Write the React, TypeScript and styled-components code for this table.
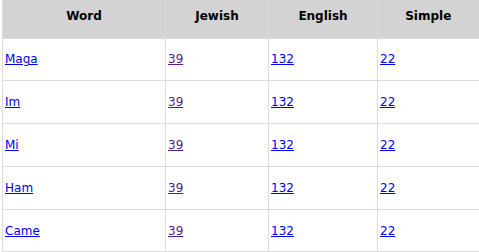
import styled, { createGlobalStyle } from 'styled-components'

const rows = [
	{ word: 'Maga', jewish: 39, english: 132, simple: 22 },
	{ word: 'Im', jewish: 39, english: 132, simple: 22 },
	{ word: 'Mi', jewish: 39, english: 132, simple: 22 },
	{ word: 'Ham', jewish: 39, english: 132, simple: 22 },
	{ word: 'Came', jewish: 39, english: 132, simple: 22 },
]

export default function App() {
	return (
		<>
			<GlobalStyle />
			<Page>
				<Table>
					<colgroup>
						<col style={{ width: 163 }} />
						<col style={{ width: 103 }} />
						<col style={{ width: 109 }} />
						<col style={{ width: 101 }} />
					</colgroup>
					<thead>
						<tr>
							<HeadCell>Word</HeadCell>
							<HeadCell>Jewish</HeadCell>
							<HeadCell>English</HeadCell>
							<HeadCell>Simple</HeadCell>
						</tr>
					</thead>
					<tbody>
						{rows.map((row) => (
							<tr key={row.word}>
								<Cell><Link href='#'>{row.word}</Link></Cell>
								<Cell><Link href='#' visited>{row.jewish}</Link></Cell>
								<Cell><Link href='#'>{row.english}</Link></Cell>
								<Cell><Link href='#'>{row.simple}</Link></Cell>
							</tr>
						))}
					</tbody>
				</Table>
			</Page>
		</>
	)
}

const GlobalStyle = createGlobalStyle`
	html, body {
		margin: 0;
		background: #fff;
		overflow: hidden;
	}
	body {
		font-family: 'DejaVu Sans', Verdana, sans-serif;
		font-size: 12px;
	}
`

const Page = styled.div`
	padding-left: 2px;
	width: 477px;
`

const Table = styled.table`
	border-collapse: collapse;
	table-layout: fixed;
	width: 476px;
	font-size: 12px;
`

const HeadCell = styled.th`
	box-sizing: border-box;
	background-color: #d3d3d3;
	border: 1px solid #dcdcdc;
	border-top: none;
	border-bottom: none;
	height: 38px;
	padding: 9px 0 0;
	vertical-align: top;
	text-align: center;
	font-weight: bold;
	font-size: 12px;
	line-height: 14px;
	color: #000;

	&:last-child {
		border-right: none;
	}
`

const Cell = styled.td`
	border: 1px solid #dcdcdc;
	height: 41.8px;
	padding: 0 0 0 2px;
	vertical-align: middle;
	font-size: 12px;
	line-height: 14px;

	&:last-child {
		border-right: none;
	}
`

const Link = styled.a<{ visited?: boolean }>`
	color: ${({ visited }) => (visited ? '#551a8b' : '#0000ee')};
	text-decoration: underline;
`
